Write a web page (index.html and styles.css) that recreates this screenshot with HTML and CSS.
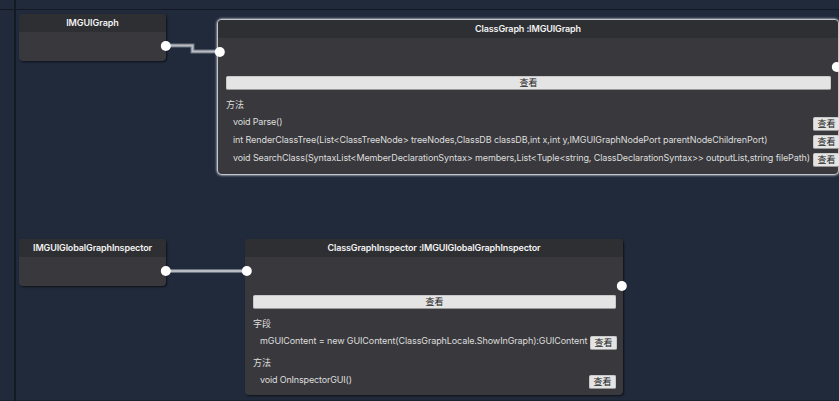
FILE: index.html
```
<!DOCTYPE html>
<html lang="zh-CN">
<head>
<meta charset="utf-8">
<title>Class Graph</title>
<link rel="stylesheet" href="styles.css">
</head>
<body>
<main class="canvas">
  <section class="node node-graph"><h2 class="title">IMGUIGraph</h2></section>
  <section class="node node-class selected">
    <h2 class="title">ClassGraph :IMGUIGraph</h2>
    <div class="body">
      <button class="view wide">查看</button>
      <h3 class="label">方法</h3>
      <div class="row"><span class="sig short">void Parse()</span><button class="view">查看</button></div>
      <div class="row"><span class="sig">int RenderClassTree(List&lt;ClassTreeNode&gt; treeNodes,ClassDB classDB,int x,int y,IMGUIGraphNodePort parentNodeChildrenPort)</span><button class="view">查看</button></div>
      <div class="row"><span class="sig long">void SearchClass(SyntaxList&lt;MemberDeclarationSyntax&gt; members,List&lt;Tuple&lt;string, ClassDeclarationSyntax&gt;&gt; outputList,string filePath)</span><button class="view">查看</button></div>
    </div>
  </section>
  <section class="node node-global"><h2 class="title">IMGUIGlobalGraphInspector</h2></section>
  <section class="node node-inspector">
    <h2 class="title">ClassGraphInspector :IMGUIGlobalGraphInspector</h2>
    <div class="body">
      <button class="view wide">查看</button>
      <h3 class="label">字段</h3>
      <div class="row field"><span class="sig">mGUIContent = new GUIContent(ClassGraphLocale.ShowInGraph):GUIContent</span><button class="view">查看</button></div>
      <h3 class="label second">方法</h3>
      <div class="row"><span class="sig short">void OnInspectorGUI()</span><button class="view">查看</button></div>
    </div>
  </section>
  <svg class="links" width="839" height="401" viewBox="0 0 839 401">
    <g class="wire-edge"><path d="M166 45.5H192.5V51.5H220"/><path d="M166 271H247"/></g>
    <g class="wire"><path d="M166 45.5H192.5V51.5H220"/><path d="M166 271H247"/></g>
    <g class="port">
      <circle cx="165.8" cy="46" r="5"/><circle cx="219.8" cy="52" r="5"/><circle cx="836.8" cy="67" r="5"/>
      <circle cx="165.8" cy="271" r="5"/><circle cx="246.8" cy="271" r="5"/><circle cx="621.8" cy="286" r="5"/>
    </g>
  </svg>
</main>
</body>
</html>
```
FILE: styles.css
```
* { box-sizing: border-box; }
body { margin: 0; overflow: hidden; }
.canvas {
  position: relative;
  width: 839px;
  height: 401px;
  overflow: hidden;
  background:
    linear-gradient(#131925, #131925) 14px 0 / 2px 100% no-repeat,
    linear-gradient(#131925, #131925) 0 9px / 100% 1px no-repeat,
    linear-gradient(#1b2332, #1b2332) 0 400px / 100% 1px no-repeat,
    #212a3b;
  font-family: Inter, "Noto Sans CJK SC", sans-serif;
  font-size: 9px;
  color: #dedede;
}
.node {
  position: absolute;
  background: #39393d;
  border-radius: 4px;
  box-shadow: 1px 1px 2px rgba(0, 0, 0, .6);
}
.node-graph { left: 19px; top: 14px; width: 147px; height: 47px; }
.node-class { left: 218px; top: 20px; width: 620px; height: 154px; }
.node-global { left: 19px; top: 239px; width: 147px; height: 47px; }
.node-inspector { left: 245px; top: 239px; width: 378px; height: 156px; }
.selected { box-shadow: 0 0 0 1px #c2c5ca, 0 0 2px 2px #858d99; }
.title {
  margin: 0;
  height: 18px;
  line-height: 18px;
  border-radius: 4px 4px 0 0;
  background: #2e2f32;
  color: #f2f2f2;
  font-size: 9px;
  font-weight: 600;
  letter-spacing: -.135px;
  text-align: center;
  white-space: nowrap;
}
.node-graph .title { letter-spacing: -.05px; }
.body { padding: 38px 7px 0 8px; }
.view {
  display: block;
  flex: none;
  width: 27px;
  height: 14px;
  padding: 0;
  border: 1px solid #c8c8c8;
  border-bottom-color: #999;
  border-radius: 2px;
  background: #e4e4e4;
  color: #222;
  font: 9px/12px Inter, "Noto Sans CJK SC", sans-serif;
}
.wide { width: 100%; }
.label {
  margin: 6px 0 3px;
  height: 18px;
  line-height: 18px;
  font-size: 9px;
  font-weight: 400;
}
.row {
  display: flex;
  justify-content: space-between;
  height: 18px;
  padding-left: 7px;
}
.sig { line-height: 9px; letter-spacing: -.102px; white-space: nowrap; }
.short { letter-spacing: -.16px; }
.long { letter-spacing: -.118px; }
.node-class .row { margin-right: -9px; }
.node-inspector .field { margin-right: -1px; }
.node-inspector .second { margin: 0 0 3px; }
.links { position: absolute; left: 0; top: 0; }
.wire-edge { fill: none; stroke: #6c7480; stroke-width: 4; }
.wire { fill: none; stroke: #b9bcc2; stroke-width: 2; }
.port { fill: #fff; }
```
